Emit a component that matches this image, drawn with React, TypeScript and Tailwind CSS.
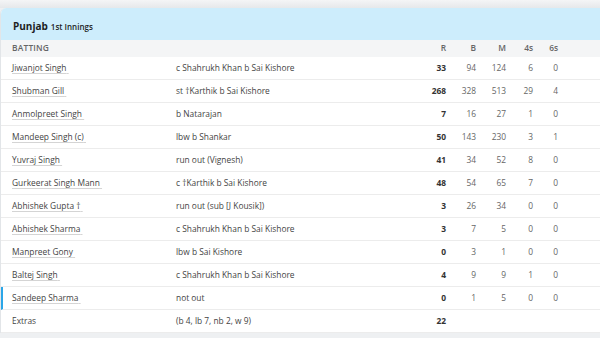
import React from 'react';

type Row = {
  name: string;
  how: string;
  r: string;
  b?: string;
  m?: string;
  fours?: string;
  sixes?: string;
  active?: boolean;
};

const rows: Row[] = [
  { name: 'Jiwanjot Singh', how: 'c Shahrukh Khan b Sai Kishore', r: '33', b: '94', m: '124', fours: '6', sixes: '0' },
  { name: 'Shubman Gill', how: 'st \u2020Karthik b Sai Kishore', r: '268', b: '328', m: '513', fours: '29', sixes: '4' },
  { name: 'Anmolpreet Singh', how: 'b Natarajan', r: '7', b: '16', m: '27', fours: '1', sixes: '0' },
  { name: 'Mandeep Singh (c)', how: 'lbw b Shankar', r: '50', b: '143', m: '230', fours: '3', sixes: '1' },
  { name: 'Yuvraj Singh', how: 'run out (Vignesh)', r: '41', b: '34', m: '52', fours: '8', sixes: '0' },
  { name: 'Gurkeerat Singh Mann', how: 'c \u2020Karthik b Sai Kishore', r: '48', b: '54', m: '65', fours: '7', sixes: '0' },
  { name: 'Abhishek Gupta \u2020', how: 'run out (sub [J Kousik])', r: '3', b: '26', m: '34', fours: '0', sixes: '0' },
  { name: 'Abhishek Sharma', how: 'c Shahrukh Khan b Sai Kishore', r: '3', b: '7', m: '5', fours: '0', sixes: '0' },
  { name: 'Manpreet Gony', how: 'lbw b Sai Kishore', r: '0', b: '3', m: '1', fours: '0', sixes: '0' },
  { name: 'Baltej Singh', how: 'c Shahrukh Khan b Sai Kishore', r: '4', b: '9', m: '9', fours: '1', sixes: '0' },
  { name: 'Sandeep Sharma', how: 'not out', r: '0', b: '1', m: '5', fours: '0', sixes: '0', active: true },
];

const font = { fontFamily: '"Open Sans", "Noto Sans", sans-serif' };

const Stats = ({ r, b, m, fours, sixes, head }: { r: string; b?: string; m?: string; fours?: string; sixes?: string; head?: boolean }) => (
  <div className={`flex text-right ${head ? 'font-semibold text-[#666]' : 'text-[#666]'}`}>
    <span className={`w-[40px] ${head ? '' : 'font-bold text-[#333]'}`}>{r}</span>
    <span className="w-[30px]">{b}</span>
    <span className="w-[30px]">{m}</span>
    <span className="w-[27px]">{fours}</span>
    <span className="w-[25px]">{sixes}</span>
  </div>
);

export default function App() {
  return (
    <div className="w-[600px] h-[338px] overflow-hidden bg-[#eef0f2]" style={font}>
      <div className="h-[8px] bg-gradient-to-b from-[#f4f5f6] to-[#e6e8ea]" />
      <div className="bg-white rounded-tl-[6px] border-l border-[#e2e5e8] overflow-hidden text-[8.4px]">
        <div className="h-[32px] bg-[#cdedfc] flex items-baseline pl-[12px] pt-[11px]">
          <span className="text-[10px] font-bold text-[#1e1e1e]">Punjab</span>
          <span className="ml-[3px] text-[8px] font-semibold text-[#1e1e1e]">1st Innings</span>
        </div>
        <div className="h-[17px] bg-[#f4f5f6] flex items-center pl-[11px] pr-[9px] text-[8.4px]">
          <span className="w-[394px] font-semibold tracking-[0.2px] text-[#666]">BATTING</span>
          <Stats head r="R" b="B" m="M" fours="4s" sixes="6s" />
        </div>
        {rows.map((row) => (
          <div
            key={row.name}
            className={`h-[23px] flex items-center border-b border-[#ececec] pr-[9px] ${row.active ? 'border-l-2 border-l-[#2ba6e8] pl-[9px]' : 'pl-[11px]'}`}
          >
            <span className="w-[164px] text-[#444]">
              <span className="underline decoration-[#d4d4d4] underline-offset-2">{row.name}&nbsp;</span>
            </span>
            <span className="w-[230px] text-[#444]">{row.how}</span>
            <Stats r={row.r} b={row.b} m={row.m} fours={row.fours} sixes={row.sixes} />
          </div>
        ))}
        <div className="h-[23px] flex items-center border-b border-[#ececec] pl-[11px] pr-[9px]">
          <span className="w-[164px] text-[#444]">Extras</span>
          <span className="w-[230px] text-[#444]">(b 4, lb 7, nb 2, w 9)</span>
          <Stats r="22" />
        </div>
      </div>
    </div>
  );
}
